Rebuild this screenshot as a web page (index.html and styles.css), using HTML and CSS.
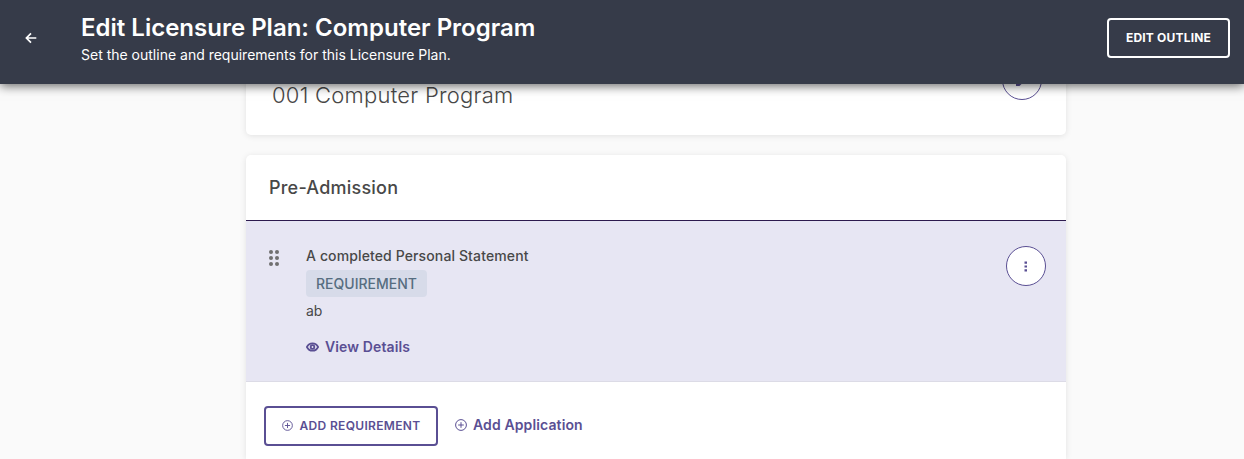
FILE: index.html
```html
<!DOCTYPE html>
<html lang="en">
<head>
    <meta charset="utf-8">
    <title>Edit Licensure Plan</title>
    <link rel="stylesheet" href="styles.css">
</head>
<body>
    <header class="topbar">
        <a class="back" href="#" aria-label="Back">
            <svg width="12" height="12" viewBox="0 0 12 12"><path d="M11.3 6H1.8M6 1.4L1.4 6L6 10.6"/></svg>
        </a>
        <div class="heading">
            <h1>Edit Licensure Plan: Computer Program</h1>
            <p>Set the outline and requirements for this Licensure Plan.</p>
        </div>
        <button type="button" class="btn btn-light">Edit Outline</button>
    </header>
    <main class="content">
        <!-- plan name -->
        <section class="card plan">
            <h2>001 Computer Program</h2>
            <button type="button" class="round" aria-label="Edit">
                <svg width="12" height="12" viewBox="0 0 12 12"><path d="M0 12V8.500L8 .5l3.500 3.500L3.500 12z"/></svg>
            </button>
        </section>
        <!-- outline section -->
        <section class="card outline">
            <h3>Pre-Admission</h3>
            <div class="item">
                <svg class="drag" width="10" height="16" viewBox="0 0 10 16">
                    <circle cx="2" cy="2" r="2"/><circle cx="8" cy="2" r="2"/>
                    <circle cx="2" cy="8" r="2"/><circle cx="8" cy="8" r="2"/>
                    <circle cx="2" cy="14" r="2"/><circle cx="8" cy="14" r="2"/>
                </svg>
                <div class="info">
                    <h4>A completed Personal Statement</h4>
                    <span class="tag">Requirement</span>
                    <p>ab</p>
                    <a class="link" href="#">
                        <svg class="eye" width="13" height="10" viewBox="0 0 13 10"><path d="M.9 5C3.4.1 9.6.1 12.1 5C9.600 9.900 3.400 9.900.9 5z"/><circle cx="6.5" cy="5" r="1.8"/></svg>
                        View Details
                    </a>
                </div>
                <button type="button" class="round" aria-label="More">
                    <svg width="4" height="11" viewBox="0 0 4 11"><path d="M.5 .5h2.500v2.200H.5zM.5 4.400h2.500v2.200H.5zM.5 8.300h2.500v2.200H.5z"/></svg>
                </button>
            </div>
            <div class="actions">
                <button type="button" class="btn btn-purple">
                    <svg class="plus" width="11" height="11" viewBox="0 0 12 12"><circle cx="6" cy="6" r="5.3"/><path d="M6 3.2v5.6M3.2 6h5.6"/></svg>
                    Add Requirement
                </button>
                <a class="link" href="#">
                    <svg class="plus" width="12" height="12" viewBox="0 0 12 12"><circle cx="6" cy="6" r="5.4"/><path d="M6 3.2v5.6M3.2 6h5.6"/></svg>
                    Add Application
                </a>
            </div>
        </section>
    </main>
</body>
</html>
```
FILE: styles.css
```css
* {
    box-sizing: border-box;
    margin: 0;
    padding: 0;
}
body {
    background: #fafafa;
    color: #484848;
    font-family: Inter, "Liberation Sans", sans-serif;
    font-size: 14px;
}
.topbar {
    position: sticky;
    top: 0;
    z-index: 9;
    display: flex;
    align-items: flex-start;
    height: 84px;
    padding: 0 14px 0 25px;
    background: #363b49;
    color: #fff;
    box-shadow: 0 2px 10px rgba(0, 0, 0, 0.6);
}
.back {
    width: 56px;
    margin-top: 32px;
    line-height: 0;
}
.back svg {
    fill: none;
    stroke: #fff;
    stroke-width: 1.7;
}
.heading {
    flex: 1;
    padding-top: 12px;
}
.heading h1 {
    font-size: 24px;
    font-weight: 600;
    line-height: 32px;
}
.heading p {
    line-height: 22px;
}
.btn {
    display: flex;
    align-items: center;
    justify-content: center;
    height: 40px;
    padding-bottom: 1px;
    border: 2px solid;
    border-radius: 4px;
    background: none;
    font: 700 12px Inter, "Liberation Sans", sans-serif;
    text-transform: uppercase;
    cursor: pointer;
}
.btn-light {
    width: 123px;
    margin-top: 18px;
    color: #fff;
    letter-spacing: 0.2px;
}
.btn-purple {
    width: 174px;
    gap: 6px;
    padding-left: 1px;
    color: #5a4f93;
    font-weight: 600;
    letter-spacing: 0.33px;
}
.content {
    width: 820px;
    margin: -34px 0 0 246px;
}
.card {
    border-radius: 5px;
    background: #fff;
    box-shadow: 0 1px 6px rgba(0, 0, 0, 0.1);
}
.plan {
    display: flex;
    justify-content: space-between;
    height: 85px;
    margin-bottom: 20px;
    padding: 10px 24px 0 26px;
}
.plan h2 {
    margin-top: 20px;
    font-size: 22px;
    font-weight: 300;
    letter-spacing: 0.25px;
    line-height: 30px;
}
.outline {
    border-radius: 5px 5px 0 0;
}
.card h3 {
    height: 66px;
    padding-left: 23px;
    border-bottom: 1px solid #2d1b4e;
    font-size: 18px;
    font-weight: 500;
    letter-spacing: 0.22px;
    line-height: 65px;
}
.round {
    display: flex;
    align-items: center;
    justify-content: center;
    width: 40px;
    height: 40px;
    border: 1px solid #5a4f93;
    border-radius: 50%;
    background: #fff;
    fill: #5a4f93;
}
.item {
    display: flex;
    height: 161px;
    padding: 25px 20px 0 23px;
    border-bottom: 1px solid #dcdbe6;
    background: #e7e6f3;
}
.drag {
    margin-top: 4px;
    fill: #707070;
}
.info {
    flex: 1;
    padding-left: 27px;
}
.info h4 {
    font-size: 14px;
    font-weight: 500;
    letter-spacing: 0.12px;
    line-height: 20px;
}
.tag {
    display: block;
    width: 121px;
    height: 27px;
    margin: 4px 0;
    border-radius: 4px;
    background: #d7dbe9;
    color: #566d80;
    font-weight: 500;
    line-height: 28px;
    text-align: center;
    text-transform: uppercase;
}
.info p {
    margin-bottom: 16px;
    line-height: 20px;
}
.link {
    display: flex;
    align-items: center;
    gap: 6px;
    color: #5a4f93;
    font-weight: 600;
    letter-spacing: 0.12px;
    line-height: 20px;
    text-decoration: none;
}
.plus,
.eye {
    fill: none;
    stroke: #5a4f93;
}
.eye {
    stroke-width: 1.8;
}
.actions {
    display: flex;
    align-items: flex-start;
    gap: 17px;
    height: 77px;
    padding: 24px 0 0 18px;
}
.actions .link {
    margin-top: 9px;
}
```
